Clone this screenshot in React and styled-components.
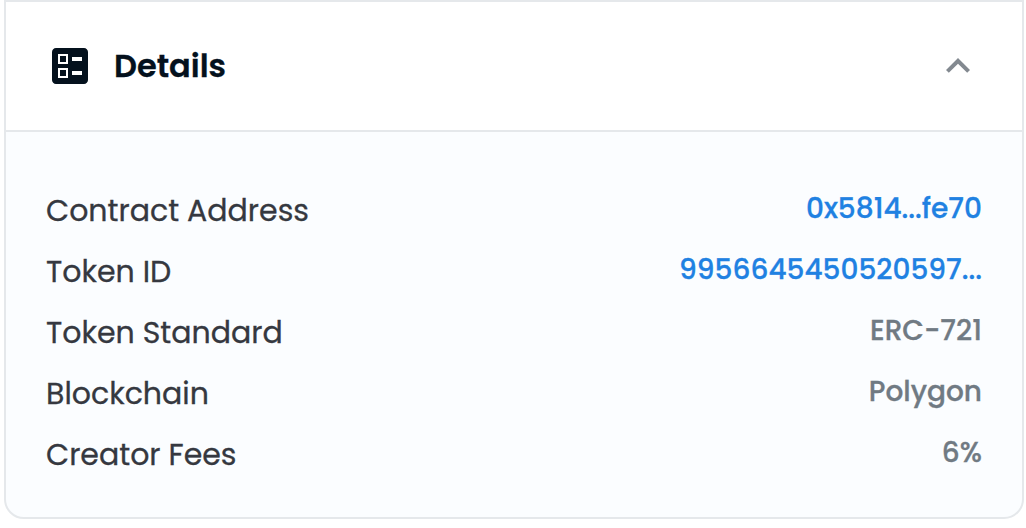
import React, { useState } from "react";
import styled, { createGlobalStyle } from "styled-components";
import { MdBallot, MdExpandLess } from "react-icons/md";

const GlobalStyle = createGlobalStyle`
	* {
		box-sizing: border-box;
	}

	body {
		margin: 0;
		background-color: #ffffff;
		font-family: Poppins, Inter, sans-serif;
	}
`;

const Panel = styled.section`
	width: 1020px;
	height: 519px;
	margin-left: 4px;
	border: 2px solid #e5e8eb;
	border-radius: 0 0 20px 20px;
	background-color: #fbfdff;
	overflow: hidden;
`;

const Header = styled.header`
	display: flex;
	align-items: center;
	height: 130px;
	padding: 0 40px;
	border-bottom: 2px solid #e5e8eb;
	background-color: #ffffff;
	color: #04111d;
	cursor: pointer;

	svg {
		width: 48px;
		height: 48px;
	}

	.arrow {
		margin-left: auto;
		color: #838990;
		transform: ${(props) => (props.$open ? "none" : "rotate(180deg)")};
	}
`;

const Title = styled.h2`
	margin: 0 0 0 20px;
	font-size: 32px;
	font-weight: 600;
	-webkit-text-stroke: 0.3px;
`;

const Body = styled.div`
	padding: 48px 40px 0;
`;

const Row = styled.div`
	display: flex;
	justify-content: space-between;
	height: 61px;
	line-height: 61px;
`;

const Label = styled.span`
	font-size: 30px;
	font-weight: 400;
	color: #353840;
	-webkit-text-stroke: 0.3px;
`;

const Value = styled.span`
	line-height: 58px;
	font-size: 28px;
	font-weight: 500;
	color: ${(props) => (props.$link ? "#2081e2" : "#707a83")};
	-webkit-text-stroke: 0.3px;
`;

const details = [
	{ label: "Contract Address", value: "0x5814...fe70", link: true },
	{ label: "Token ID", value: "9956645450520597...", link: true },
	{ label: "Token Standard", value: "ERC-721" },
	{ label: "Blockchain", value: "Polygon" },
	{ label: "Creator Fees", value: "6%" },
];

const App = () => {
	const [open, setOpen] = useState(true);

	return (
		<>
			<GlobalStyle />
			<Panel>
				<Header $open={open} onClick={() => setOpen(!open)}>
					<MdBallot />
					<Title>Details</Title>
					<MdExpandLess className="arrow" />
				</Header>
				{open && (
					<Body>
						{details.map((item) => (
							<Row key={item.label}>
								<Label>{item.label}</Label>
								<Value $link={item.link}>{item.value}</Value>
							</Row>
						))}
					</Body>
				)}
			</Panel>
		</>
	);
};

export default App;
